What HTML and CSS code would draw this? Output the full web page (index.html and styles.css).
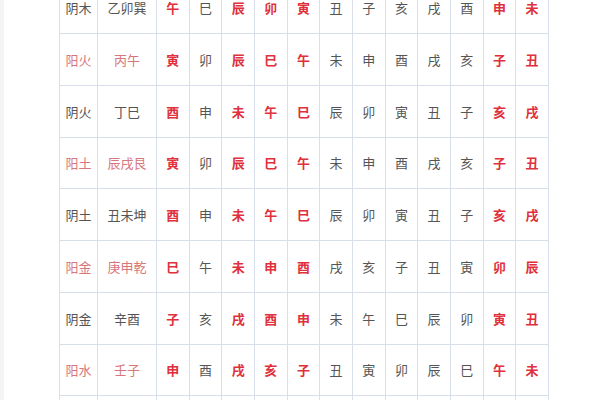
FILE: index.html
```html
<!DOCTYPE html>
<html lang="zh">
<head>
<meta charset="utf-8">
<link rel="stylesheet" href="styles.css">
</head>
<body>
<div class="page">
  <div class="grid">
    <div class="c">阴木</div><div class="c">乙卯巽</div><div class="c r">午</div><div class="c">巳</div><div class="c r">辰</div><div class="c r">卯</div><div class="c r">寅</div><div class="c">丑</div><div class="c">子</div><div class="c">亥</div><div class="c">戌</div><div class="c">酉</div><div class="c r">申</div><div class="c r">未</div>
    <div class="c p">阳火</div><div class="c p">丙午</div><div class="c r">寅</div><div class="c">卯</div><div class="c r">辰</div><div class="c r">巳</div><div class="c r">午</div><div class="c">未</div><div class="c">申</div><div class="c">酉</div><div class="c">戌</div><div class="c">亥</div><div class="c r">子</div><div class="c r">丑</div>
    <div class="c">阴火</div><div class="c">丁巳</div><div class="c r">酉</div><div class="c">申</div><div class="c r">未</div><div class="c r">午</div><div class="c r">巳</div><div class="c">辰</div><div class="c">卯</div><div class="c">寅</div><div class="c">丑</div><div class="c">子</div><div class="c r">亥</div><div class="c r">戌</div>
    <div class="c p">阳土</div><div class="c p">辰戌艮</div><div class="c r">寅</div><div class="c">卯</div><div class="c r">辰</div><div class="c r">巳</div><div class="c r">午</div><div class="c">未</div><div class="c">申</div><div class="c">酉</div><div class="c">戌</div><div class="c">亥</div><div class="c r">子</div><div class="c r">丑</div>
    <div class="c">阴土</div><div class="c">丑未坤</div><div class="c r">酉</div><div class="c">申</div><div class="c r">未</div><div class="c r">午</div><div class="c r">巳</div><div class="c">辰</div><div class="c">卯</div><div class="c">寅</div><div class="c">丑</div><div class="c">子</div><div class="c r">亥</div><div class="c r">戌</div>
    <div class="c p">阳金</div><div class="c p">庚申乾</div><div class="c r">巳</div><div class="c">午</div><div class="c r">未</div><div class="c r">申</div><div class="c r">酉</div><div class="c">戌</div><div class="c">亥</div><div class="c">子</div><div class="c">丑</div><div class="c">寅</div><div class="c r">卯</div><div class="c r">辰</div>
    <div class="c">阴金</div><div class="c">辛酉</div><div class="c r">子</div><div class="c">亥</div><div class="c r">戌</div><div class="c r">酉</div><div class="c r">申</div><div class="c">未</div><div class="c">午</div><div class="c">巳</div><div class="c">辰</div><div class="c">卯</div><div class="c r">寅</div><div class="c r">丑</div>
    <div class="c p">阳水</div><div class="c p">壬子</div><div class="c r">申</div><div class="c">酉</div><div class="c r">戌</div><div class="c r">亥</div><div class="c r">子</div><div class="c">丑</div><div class="c">寅</div><div class="c">卯</div><div class="c">辰</div><div class="c">巳</div><div class="c r">午</div><div class="c r">未</div>
    <div class="c">阴水</div><div class="c">癸亥</div><div class="c r">卯</div><div class="c">寅</div><div class="c r">丑</div><div class="c r">子</div><div class="c r">亥</div><div class="c">戌</div><div class="c">酉</div><div class="c">申</div><div class="c">未</div><div class="c">午</div><div class="c r">巳</div><div class="c r">辰</div>
  </div>
</div>
</body>
</html>
```

FILE: styles.css
```css
html, body {
  margin: 0;
  padding: 0;
  background: #ffffff;
  overflow: hidden;
}
.page {
  width: 600px;
  height: 400px;
  overflow: hidden;
  box-sizing: border-box;
  border-left: 4px solid #f4f4f5;
  padding-left: 55px;
}
.grid {
  display: grid;
  grid-template-columns: 37px 58px repeat(12, 31.67px);
  grid-auto-rows: 50.75px;
  gap: 1px;
  padding: 1px;
  background: #d9dfea;
  width: max-content;
  margin-top: -18.75px;
}
.c {
  background: #ffffff;
  display: flex;
  align-items: center;
  justify-content: center;
  font-family: "Noto Sans CJK SC", "Noto Sans", sans-serif;
  font-size: 13px;
  color: #555555;
  white-space: nowrap;
}
.r {
  color: #e0303c;
  font-weight: bold;
}
.p {
  color: #d8777b;
}
```
